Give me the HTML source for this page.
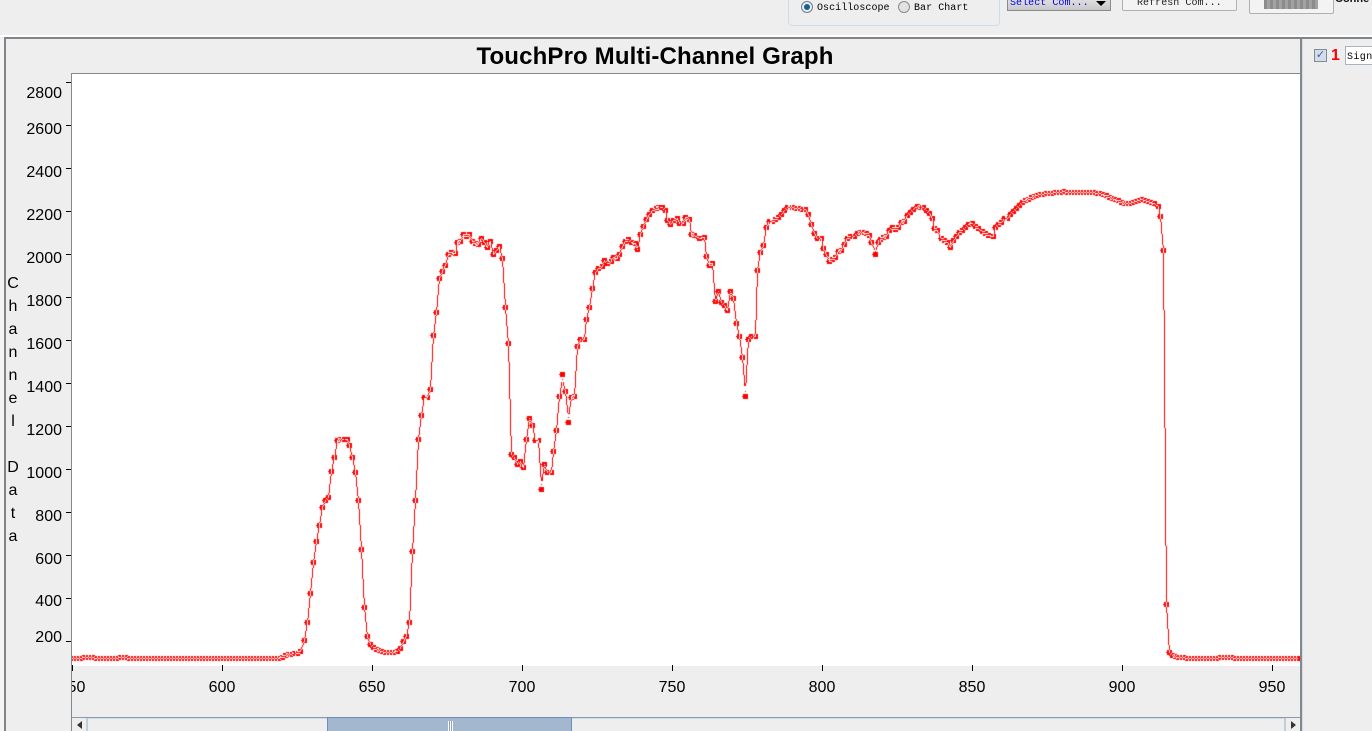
<!DOCTYPE html>
<html><head><meta charset="utf-8"><style>
html,body{margin:0;padding:0}
body{width:1372px;height:731px;overflow:hidden;position:relative;background:#eee;font-family:"Liberation Sans",sans-serif;color:#000}
div,span,canvas{position:absolute;box-sizing:border-box}
.m{font:10px/12px "Liberation Mono",monospace;white-space:nowrap;letter-spacing:.05px}
.yl{left:20px;width:42px;text-align:right;font-size:16px;line-height:18px}
.xl{top:679px;width:60px;text-align:center;font-size:16px;line-height:18px}
.yt{left:66px;width:5px;height:1px;background:#000}
.xt{top:665px;width:1px;height:6px;background:#000}
</style></head><body>
<div style="left:788px;top:-20px;width:212px;height:46px;border:1px solid #cfdde8;border-radius:4px"></div>
<div style="left:801px;top:1px;width:12px;height:12px;border-radius:50%;border:1px solid #6f7f8c;background:#e8eef2"></div>
<div style="left:804px;top:4px;width:6px;height:6px;border-radius:50%;background:#14608f"></div>
<div class="m" style="left:817px;top:3px">Oscilloscope</div>
<div style="left:898px;top:1px;width:12px;height:12px;border-radius:50%;border:1px solid #8b8b8b;background:#e2e2e2"></div>
<div class="m" style="left:914px;top:3px">Bar Chart</div>
<div style="left:1007px;top:-10px;width:104px;height:21px;border:1px solid #8a8a8a;background:linear-gradient(#f0f0f0,#c8c8c8)"></div>
<div class="m" style="left:1010px;top:-2px;color:#0000e6">Select Com...</div>
<div style="left:1096px;top:1px;width:0;height:0;border:5px solid transparent;border-top:5px solid #000;border-bottom:0"></div>
<div style="left:1122px;top:-10px;width:115px;height:21px;border:1px solid #b0b0b0;border-radius:2px;background:#f3f3f3"></div>
<div class="m" style="left:1137px;top:-2px;color:#222">Refresh Com...</div>
<div style="left:1249px;top:-10px;width:85px;height:24px;border:1px solid #b0b0b0;border-radius:2px;background:#f3f3f3"></div>
<div style="left:1264px;top:0;width:54px;height:9px;background:repeating-linear-gradient(90deg,#8c8c8c 0 3px,#a2a2a2 3px 6px)"></div>
<div style="left:1335px;top:-7px;font-size:11px;line-height:13px;font-weight:bold;color:#111;white-space:nowrap">Conne</div>

<div style="left:0;top:35px;width:1372px;height:2px;background:#fff"></div>
<div style="left:4px;top:37px;width:1368px;height:2px;background:#808488"></div>
<div style="left:4px;top:37px;width:2px;height:694px;background:#808488"></div>
<div style="left:0;top:39px;width:4px;height:692px;background:#f4f4f4"></div>

<div style="left:6px;top:43px;width:1298px;text-align:center;font-size:24px;line-height:28px;font-weight:bold;white-space:nowrap;letter-spacing:.15px">TouchPro Multi-Channel Graph</div>

<div style="left:71px;top:73px;width:1231px;height:593px;background:#fff"></div>
<div style="left:71px;top:73px;width:1231px;height:1px;background:#808890"></div>
<div style="left:71px;top:73px;width:1px;height:658px;background:#808890"></div>
<div style="left:1300px;top:39px;width:2px;height:692px;background:#808890"></div>
<div style="left:1302px;top:39px;width:1px;height:692px;background:#d8dde2"></div>
<canvas id="c" width="1228" height="591" style="left:72px;top:74px"></canvas>

<div class="yt" style="top:82px"></div><div class="yt" style="top:125px"></div><div class="yt" style="top:168px"></div><div class="yt" style="top:211px"></div><div class="yt" style="top:254px"></div><div class="yt" style="top:297px"></div><div class="yt" style="top:340px"></div><div class="yt" style="top:383px"></div><div class="yt" style="top:426px"></div><div class="yt" style="top:469px"></div><div class="yt" style="top:512px"></div><div class="yt" style="top:555px"></div><div class="yt" style="top:598px"></div><div class="yt" style="top:641px"></div>
<div class="yl" style="top:85px">2800</div>
<div class="yl" style="top:121px">2600</div>
<div class="yl" style="top:164px">2400</div>
<div class="yl" style="top:207px">2200</div>
<div class="yl" style="top:250px">2000</div>
<div class="yl" style="top:293px">1800</div>
<div class="yl" style="top:336px">1600</div>
<div class="yl" style="top:379px">1400</div>
<div class="yl" style="top:422px">1200</div>
<div class="yl" style="top:465px">1000</div>
<div class="yl" style="top:508px">800</div>
<div class="yl" style="top:551px">600</div>
<div class="yl" style="top:593px">400</div>
<div class="yl" style="top:629px">200</div>

<div style="left:3px;top:272px;width:20px;text-align:center;font-size:16px;line-height:23px;">C<br>h<br>a<br>n<br>n<br>e<br>l<br>&nbsp;<br>D<br>a<br>t<br>a</div>

<div class="xt" style="left:72px"></div><div class="xt" style="left:222px"></div><div class="xt" style="left:372px"></div><div class="xt" style="left:522px"></div><div class="xt" style="left:672px"></div><div class="xt" style="left:822px"></div><div class="xt" style="left:972px"></div><div class="xt" style="left:1122px"></div><div class="xt" style="left:1272px"></div>
<div style="left:72px;top:666px;width:40px;height:40px;overflow:hidden"><div class="xl" style="left:-30px;top:13px">550</div></div>
<div class="xl" style="left:192px">600</div><div class="xl" style="left:342px">650</div><div class="xl" style="left:492px">700</div><div class="xl" style="left:642px">750</div><div class="xl" style="left:792px">800</div><div class="xl" style="left:942px">850</div><div class="xl" style="left:1092px">900</div><div class="xl" style="left:1242px">950</div>

<div style="left:72px;top:717px;width:1228px;height:1px;background:#8a9aab"></div>
<div style="left:72px;top:718px;width:1228px;height:1px;background:#cfdcea"></div>
<div style="left:72px;top:718px;width:16px;height:13px;background:#eee;border-right:2px solid #c4ccd4"></div>
<div style="left:77px;top:721px;width:0;height:0;border:4px solid transparent;border-right:5px solid #333;border-left:0"></div>
<div style="left:1284px;top:718px;width:16px;height:13px;background:#eee;border-left:2px solid #c4ccd4"></div>
<div style="left:1291px;top:721px;width:0;height:0;border:4px solid transparent;border-left:5px solid #333;border-right:0"></div>
<div style="left:327px;top:717px;width:245px;height:14px;background:#a3b8cf;border:1px solid #6c8cc0;border-bottom:0"></div>
<div style="left:448px;top:721px;width:5px;height:10px;background:repeating-linear-gradient(90deg,#fff 0 1px,#8ea4bd 1px 2px)"></div>

<div style="left:1314px;top:49px;width:13px;height:13px;border:1px solid #7f8c9a;background:#d4dce6;color:#3a5fb0;font-size:11px;line-height:11px;text-align:center">✓</div>
<div style="left:1331px;top:47px;font-size:16px;line-height:18px;font-weight:bold;color:#f00">1</div>
<div style="left:1345px;top:46px;width:40px;height:19px;border:1px solid #a9b4bf;background:#fff"></div>
<div class="m" style="left:1347px;top:52px;letter-spacing:.4px">Signal</div>

<script>
var P=[];
var i,x;
for(x=72;x<=279;x+=3){var yy=658;if((x>=84&&x<=93)||(x>=120&&x<=126))yy=657;P.push([x,yy]);}
var d="282,657 285,655 288,654 291,654 294,653 297,653 300,651 304,640 307,622 310,593 313,562 316,541 319,525 322,507 325,500 328,497 331,471 334,457 337,440 340,439 343,439 347,439 349,445 352,457 355,472 358,500 361,549 364,607 367,636 370,644 373,647 376,649 379,650 382,651 385,652 388,652 391,652 394,652 397,651 400,648 403,641 406,636 409,622 412,551 415,500 418,439 421,415 424,397 427,397 430,389 433,335 436,312 439,278 442,271 445,265 448,254 451,252 455,253 457,242 460,241 463,234 466,236 469,234 472,241 475,243 478,244 481,238 484,242 487,247 490,241 493,254 496,250 499,246 502,258 505,307 508,343 511,454 514,457 517,464 520,461 523,467 526,439 529,418 532,425 535,440 538,440 541,489,-5 544,464 547,472 551,472 553,451 556,430 559,396 562,374,5 565,391 568,422,-5 571,397 574,396 577,346 580,339 584,339 586,319 589,307 592,288 595,272 598,268 602,266 604,260 607,263 611,261 613,257 617,258 619,254 622,246 625,241 628,239 631,242 635,243 637,249 640,234 643,226 646,219 649,214 652,210 656,208 658,207 662,207 665,210 667,220 670,224 673,220 677,218 679,223 683,223 685,217 689,219 691,234 694,235 699,238 704,237 706,256 709,265 712,263 715,301 718,291 721,302 724,305 727,310 730,291 733,298 736,323 739,336 742,357 745,396,-5 748,339 751,336 755,336 757,270 760,252 763,245 766,227 769,221 772,221 775,219 778,217 781,214 784,210 787,207 790,207 793,207 796,208 799,208 802,209 805,209 808,214 811,224 814,233 817,238 821,238 823,248 826,254 829,261 832,259 835,257 838,251 841,250 844,244 847,238 850,236 854,236 857,233 860,232 863,232 866,233 869,235 871,242 875,254,-3 878,242 880,239 883,237 886,236 889,230 892,227 895,229 898,227 901,222 904,221 907,215 910,212 913,209 917,206 920,207 923,207 926,210 929,213 932,218 934,228 937,230 941,238 944,240 947,242 950,247 953,240 956,236 959,232 962,230 965,227 968,224 972,223 975,226 978,228 982,231 985,233 988,235 993,236 995,227 998,224 1001,222 1004,218 1007,218 1010,214 1013,211 1016,208 1019,205 1022,202 1025,200 1028,199 1031,197 1034,196 1037,195 1040,194 1043,194 1046,193 1049,193 1052,193 1055,192 1058,192 1061,192 1064,191 1067,192 1070,192 1073,192 1076,192 1079,192 1082,192 1085,192 1088,192 1091,192 1094,192 1097,193 1100,193 1103,194 1106,195 1109,197 1112,198 1115,199 1118,200 1121,202 1124,203 1127,203 1130,203 1133,202 1136,201 1139,200 1142,199 1145,200 1148,201 1151,202 1154,203 1158,206 1160,216 1163,250 1166,604 1169,652 1172,655 1175,656 1178,657 1181,657 1184,657";
d.split(" ").forEach(function(s){var a=s.split(",").map(Number);P.push(a);});
for(x=1187;x<=1300;x+=3){var y2=658;if(x>=1220&&x<=1232)y2=657;P.push([x,y2]);}

var cv=document.getElementById("c"),g=cv.getContext("2d");
g.translate(-72,-74);
g.fillStyle="#f00";
g.globalCompositeOperation="xor";
function line(x0,y0,x1,y1){
  var dx=Math.abs(x1-x0),dy=Math.abs(y1-y0),sx=x0<x1?1:-1,sy=y0<y1?1:-1,e=dx-dy;
  while(!(x0==x1&&y0==y1)){
    g.fillRect(x0,y0,1,1);
    var e2=2*e;
    if(e2>-dy){e-=dy;x0+=sx}
    if(e2<dx){e+=dx;y0+=sy}
  }
}
for(i=0;i<P.length-1;i++){
  line(P[i][0],P[i][1]+(P[i][2]||0),P[i+1][0],P[i+1][1]+(P[i+1][2]||0));
}
for(i=0;i<P.length;i++){
  var a=P[i][0],b=P[i][1];
  var pv=P[i-1]||P[i],nx=P[i+1]||P[i];
  var flat=Math.abs(pv[1]-b)<=1&&Math.abs(nx[1]-b)<=1;
  g.fillRect(a-2,b-2,flat?4:5,5);
  if(!flat)g.fillRect(a-3,b,1,1);
}
</script>
</body></html>
